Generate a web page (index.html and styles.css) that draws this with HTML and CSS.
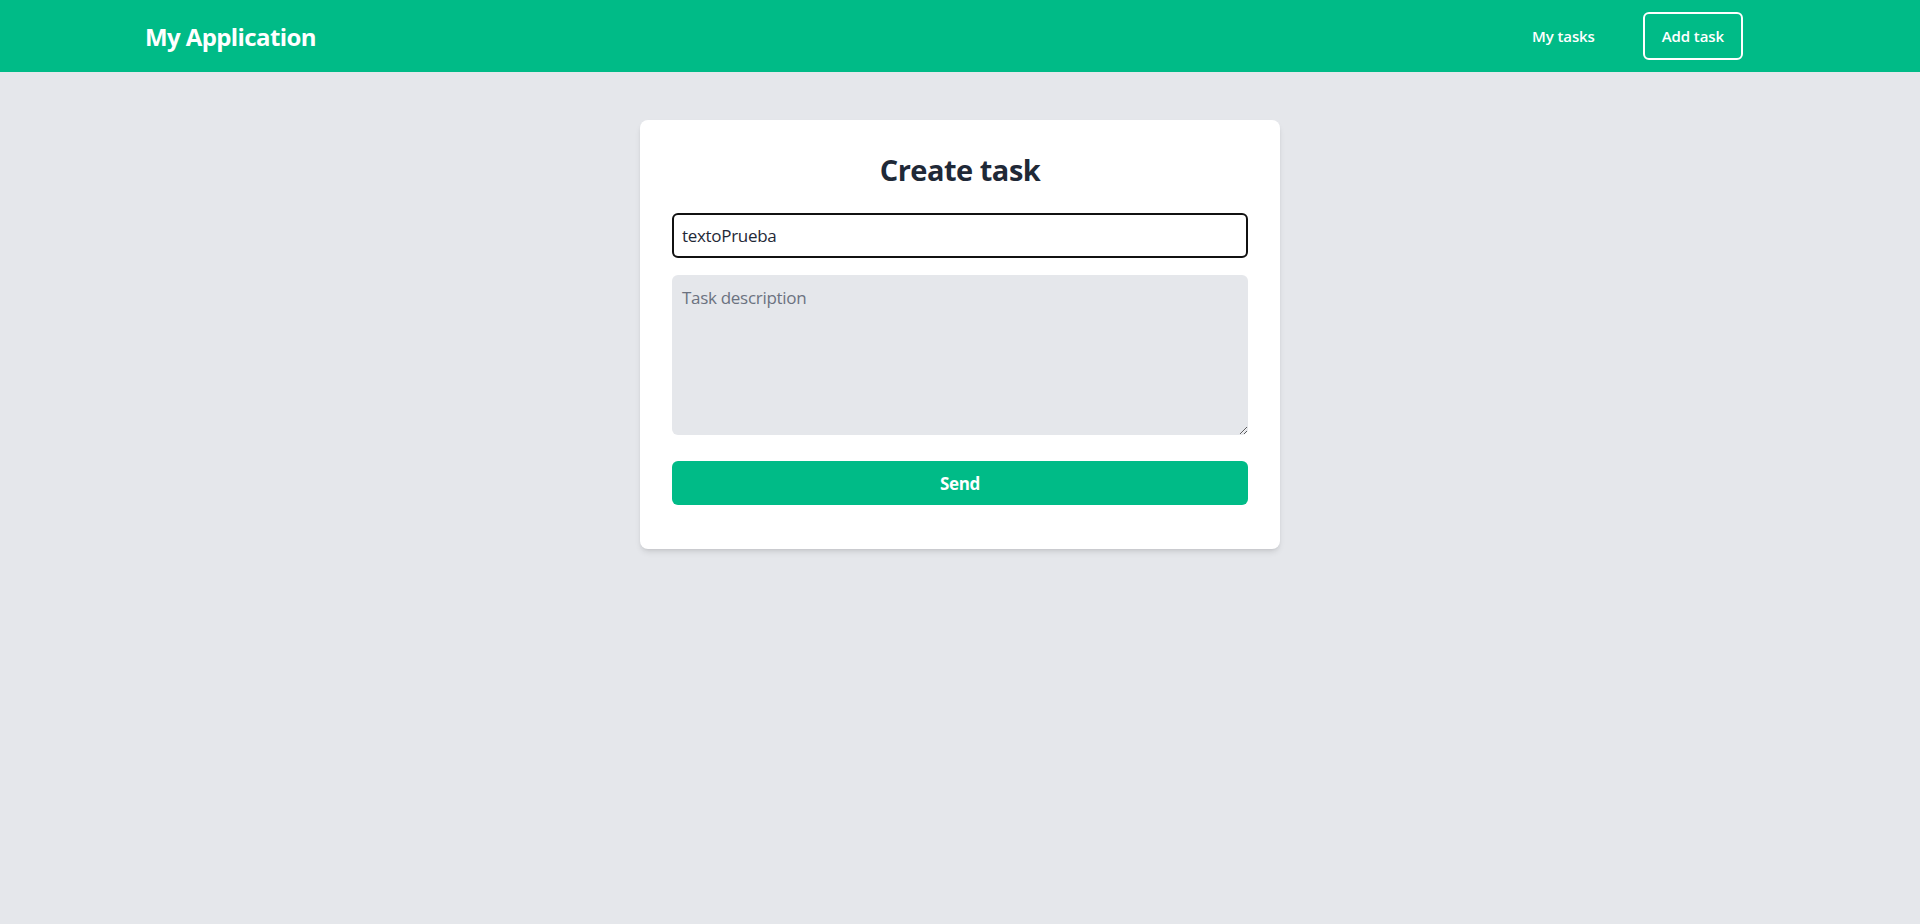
FILE: index.html
```html
<!DOCTYPE html>
<html lang="en">
<head>
<meta charset="utf-8">
<title>My Application</title>
<link rel="stylesheet" href="styles.css">
</head>
<body>
<header class="topbar">
  <a class="brand" href="#">My Application</a>
  <nav class="nav">
    <a class="nav-link" href="#">My tasks</a>
    <a class="nav-button" href="#">Add task</a>
  </nav>
</header>
<main class="main">
  <form class="card">
    <h1 class="card-title">Create task</h1>
    <input class="field field-focus" type="text" value="textoPrueba">
    <textarea class="field area" placeholder="Task description"></textarea>
    <button class="send" type="button">Send</button>
  </form>
</main>
</body>
</html>
```

FILE: styles.css
```css
* { box-sizing: border-box; }
html, body { margin: 0; padding: 0; }
body {
  background: #e5e7eb;
  font-family: "Open Sans", "Noto Sans", sans-serif;
  color: #1f2937;
  min-height: 924px;
}
.topbar {
  height: 72px;
  background: #00bb87;
  display: flex;
  align-items: center;
  justify-content: space-between;
  padding: 0 177px 0 145px;
}
.brand {
  color: #fff;
  text-decoration: none;
  font-size: 24px;
  font-weight: 700;
  letter-spacing: -0.6px;
}
.nav { display: flex; align-items: center; gap: 32px; }
.nav-link {
  color: #fff;
  text-decoration: none;
  font-size: 15px;
  font-weight: 600;
  padding: 12px 16px;
  letter-spacing: -0.1px;
}
.nav-button {
  color: #fff;
  text-decoration: none;
  font-size: 15px;
  font-weight: 600;
  line-height: 24px;
  height: 48px;
  padding: 10px 17px;
  border: 2px solid #fff;
  border-radius: 6px;
  letter-spacing: -0.1px;
}
.main { display: flex; justify-content: center; padding-top: 48px; }
.card {
  width: 640px;
  background: #fff;
  border-radius: 8px;
  padding: 32px 32px 44px;
  box-shadow: 0 4px 6px -1px rgba(0,0,0,0.1), 0 2px 4px -2px rgba(0,0,0,0.1);
  display: flex;
  flex-direction: column;
}
.card-title {
  margin: 0 0 25px;
  text-align: center;
  font-size: 29px;
  line-height: 36px;
  font-weight: 700;
  color: #1f2937;
  letter-spacing: -0.5px;
}
.field {
  width: 100%;
  font-family: "Open Sans", "Noto Sans", sans-serif;
  font-size: 17px;
  border-radius: 6px;
  color: #1f2937;
  letter-spacing: -0.3px;
}
.field-focus {
  height: 45px;
  border: 2px solid #111;
  padding: 6px 8px;
  background: #fff;
  outline: none;
}
.area {
  margin-top: 17px;
  height: 160px;
  border: none;
  background: #e5e7eb;
  padding: 11px 10px 8px;
  resize: vertical;
  display: block;
}
.area::placeholder { color: #6b7280; }
.send {
  margin-top: 26px;
  height: 44px;
  border: none;
  border-radius: 6px;
  background: #00bb87;
  color: #fff;
  font-family: "Open Sans", "Noto Sans", sans-serif;
  font-size: 17px;
  font-weight: 700;
  letter-spacing: -0.3px;
}
```
